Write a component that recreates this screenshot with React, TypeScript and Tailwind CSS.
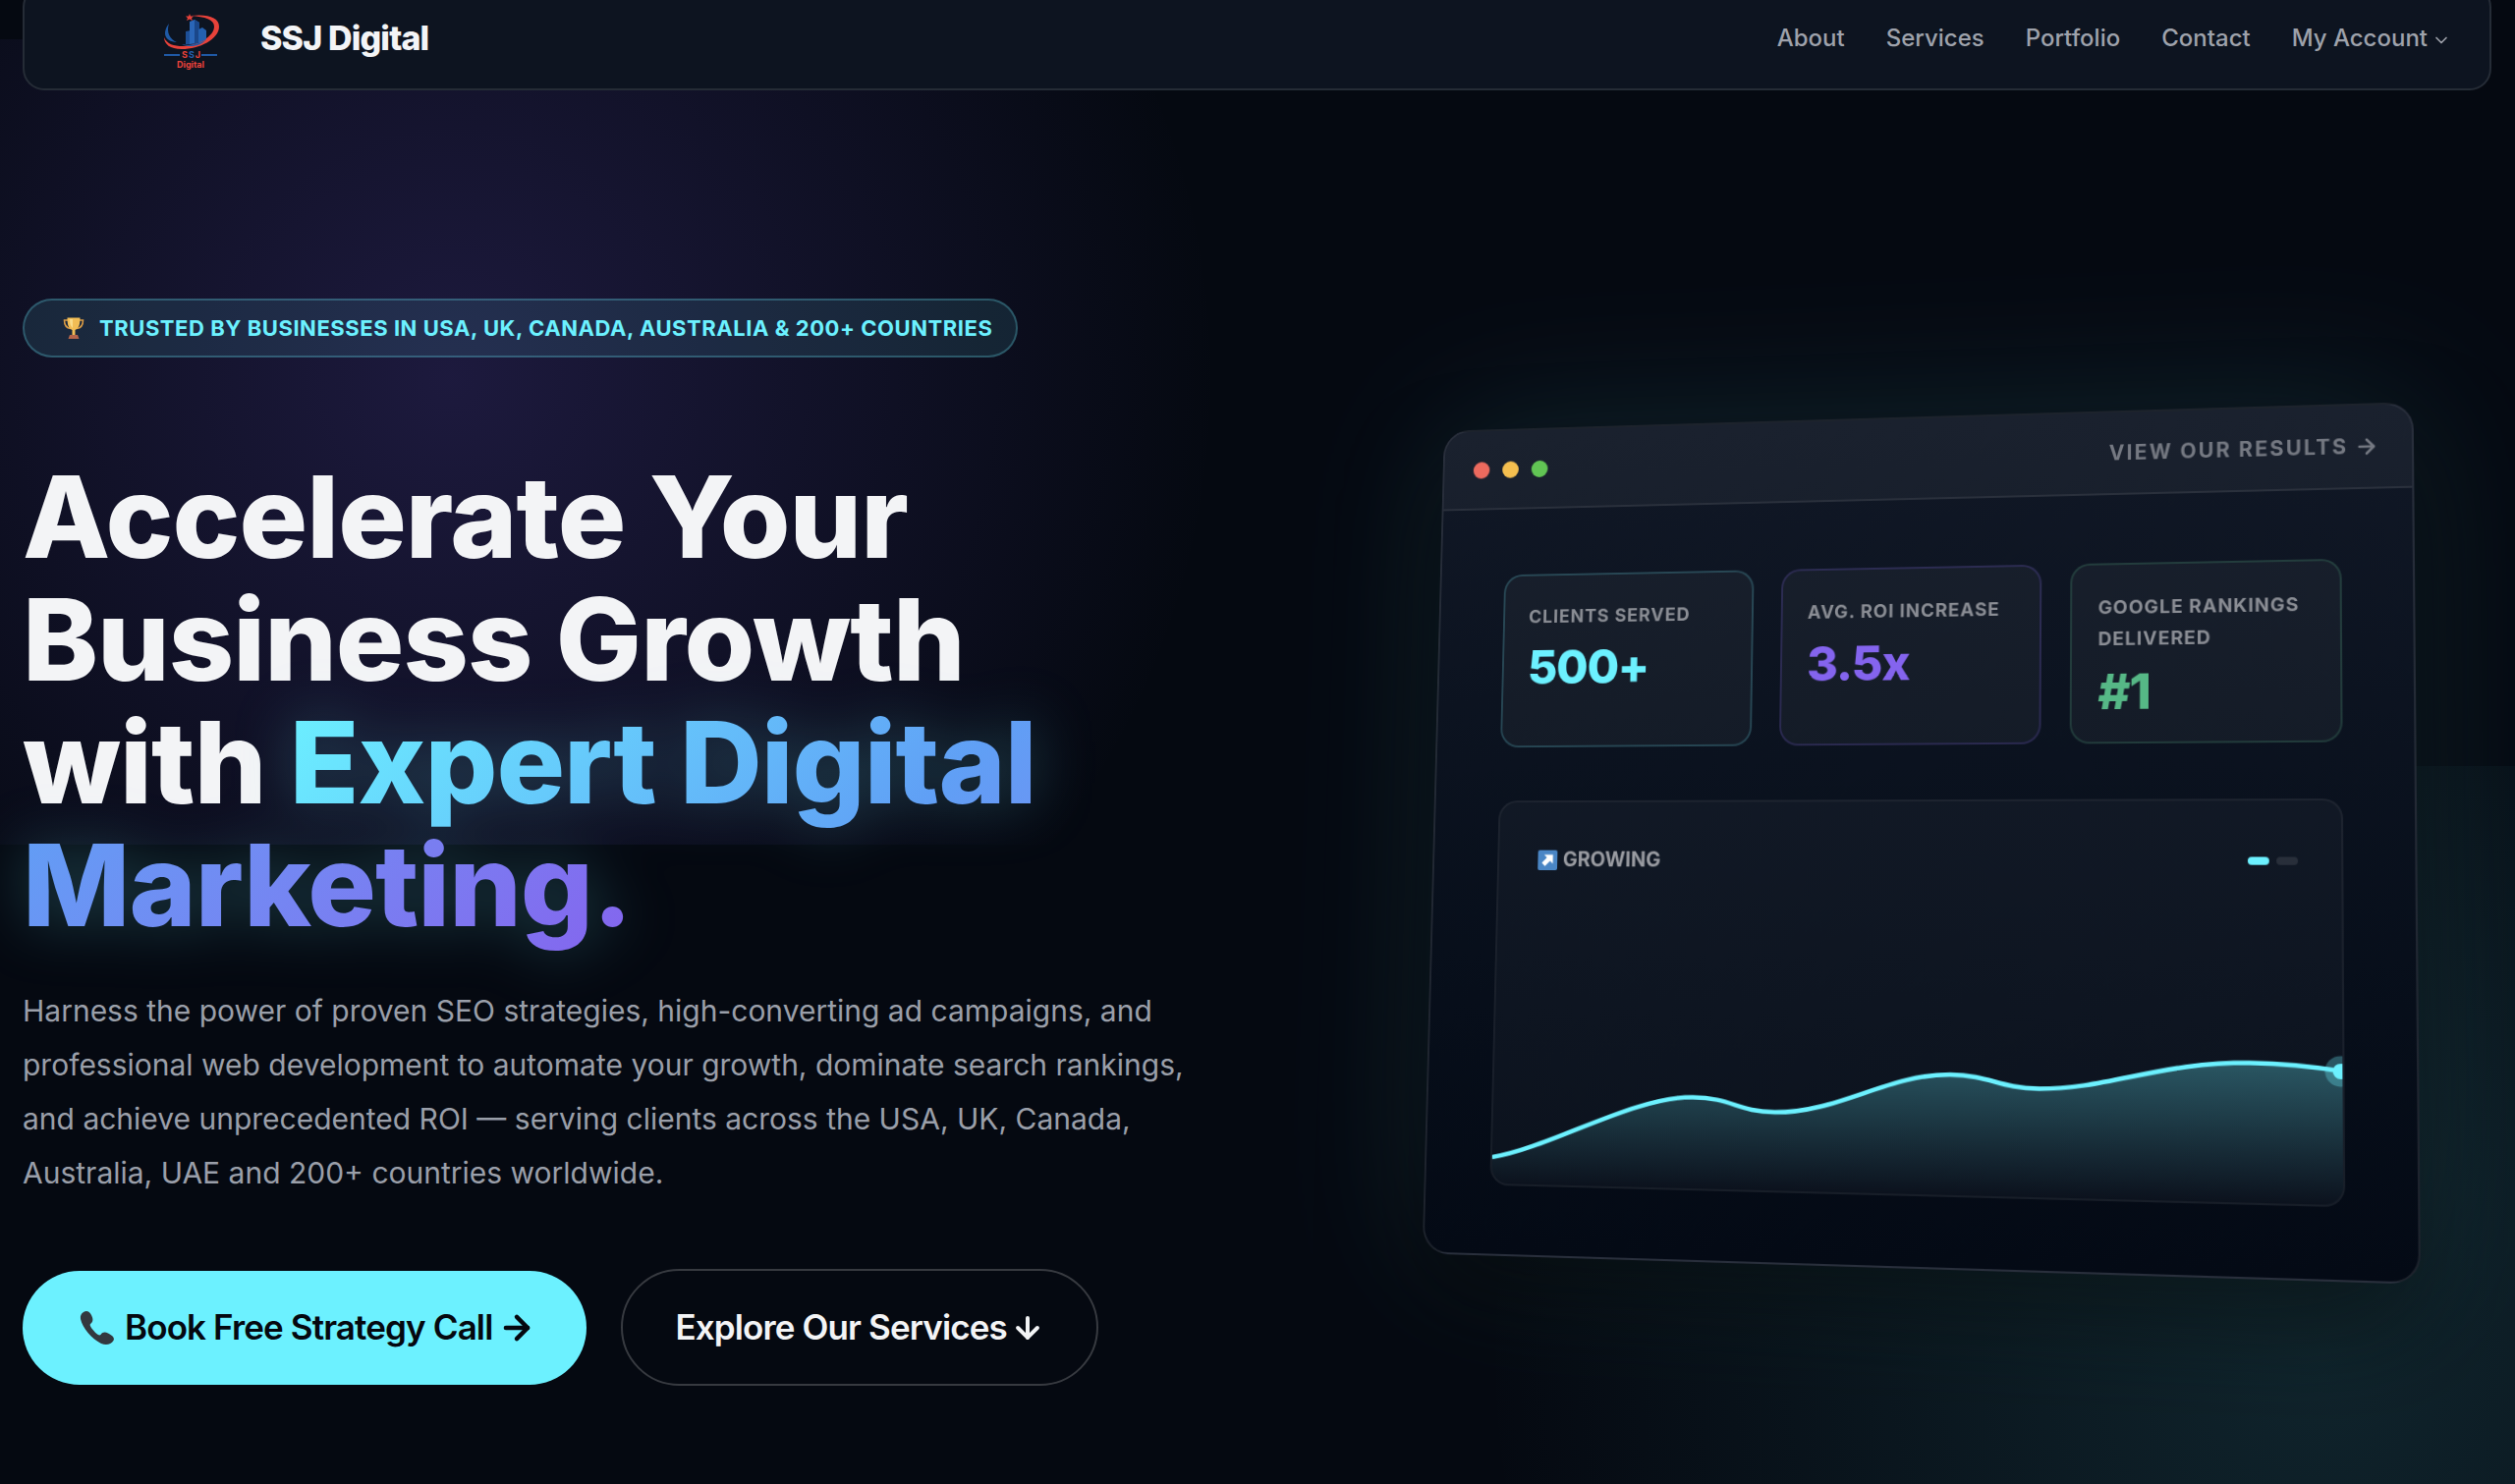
import { ArrowDown, ArrowRight, ChevronDown } from 'lucide-react'

interface Stat {
  label: string
  value: string
  border: string
  color: string
}

const navLinks = ['About', 'Services', 'Portfolio', 'Contact']

const stats: Stat[] = [
  { label: 'Clients Served', value: '500+', border: 'border-[#6cf1ff]/20', color: 'text-[#6cf1ff]' },
  { label: 'Avg. ROI Increase', value: '3.5x', border: 'border-[#8464ee]/20', color: 'text-[#8464ee]' },
  { label: 'Google Rankings Delivered', value: '#1', border: 'border-[#56b886]/20', color: 'text-[#56b886]' },
]

function Logo() {
  return (
    <svg viewBox="0 0 58 58" className="mt-2 h-[58px] w-[58px]" aria-hidden="true">
      <path d="M7 10C0 19 2 28 15 29C8 26 4 19 7 10Z" fill="#1f5aa6" />
      <path d="M29 2C47 0 58 4 58 13C58 26 38 36 20 36C8 36 2 31 2 24C5 31 12 33 21 33C37 32 53 23 53 13C53 6 44 3 29 2Z" fill="#e8423a" />
      <path d="M28 0L29 2.500L32 2.500L30 4.500L31 7L28 5.500L25 7L26 4.500L24 2.500L27 2.500Z" fill="#e8423a" />
      <path d="M24 18L29 17V31H24Z" fill="#1d4f96" />
      <path d="M28 8L33 6L38 9V30L28 31Z" fill="#2a66b8" />
      <path d="M33 6L38 9V30L33 30.500Z" fill="#1a478a" />
      <path d="M37 16L41 14L45 17V26L37 30Z" fill="#2461b0" />
      <path d="M20 31C30 33 40 30 45 26C40 33 28 35 20 31Z" fill="#1f5aa6" />
      <rect x="2" y="41" width="16" height="2" fill="#1f5aa6" />
      <rect x="40" y="41" width="16" height="2" fill="#1f5aa6" />
      <text x="20" y="45" fontFamily="Inter, sans-serif" fontSize="9" fontWeight="700" letterSpacing="1">
        <tspan fill="#e8423a">S</tspan>
        <tspan fill="#2461b0">S</tspan>
        <tspan fill="#e8423a">J</tspan>
      </text>
      <text x="29" y="55" textAnchor="middle" fontFamily="Inter, sans-serif" fontSize="9" fontWeight="700" fill="#e8423a">
        Digital
      </text>
    </svg>
  )
}

function TrophyIcon() {
  return (
    <svg viewBox="0 0 24 24" className="h-6 w-6 shrink-0" aria-hidden="true">
      <path d="M6 4H2.500C2.500 9 4.500 12 9 12.500" fill="none" stroke="#d99a45" strokeWidth="1.600" />
      <path d="M18 4H21.500C21.500 9 19.500 12 15 12.500" fill="none" stroke="#d99a45" strokeWidth="1.600" />
      <path d="M5.500 1.500H18.500C18.500 8 17.500 12.500 13.500 14V19H10.500V14C6.500 12.500 5.500 8 5.500 1.500Z" fill="#f2bd55" />
      <path d="M8 3H11V12C8.500 10 8 7 8 3Z" fill="#fbdc8a" />
      <path d="M8 19H16L17.500 23H6.500Z" fill="#b5654a" />
    </svg>
  )
}

function PhoneIcon() {
  return (
    <svg viewBox="0 0 36 36" className="h-9 w-9 shrink-0" aria-hidden="true">
      <path
        d="M4 2C7 0 10 1 12 5C14 9 14 12 11 14C10 15 11 17 14 20.500C17 24 19.500 26.500 21.500 25C23.500 22 26 22 29 23.500C34 26 36 28.500 34.500 31C32 35 27 36 22 34C12 29 3 18 1 9C0.500 6 1.500 3.500 4 2Z"
        fill="#33383f"
      />
    </svg>
  )
}

function GrowIcon() {
  return (
    <svg viewBox="0 0 22 22" className="h-[21px] w-[21px]" aria-hidden="true">
      <rect width="22" height="22" rx="2" fill="#4a86c5" />
      <path d="M7 5H17V15L13.800 11.800L8 17.500L4.500 14L10.200 8.200Z" fill="#fff" />
    </svg>
  )
}

function GrowthChart() {
  const line =
    'M0 173C62 162 150 107.500 212 107.500C254 107.500 258 121 298 121C362 121 415 80 477 80C519 80 525 92.400 567 92.400C632 92.400 690 63.400 774 63.400C806 63.400 836 66 864 70.400'
  return (
    <svg viewBox="0 0 864 200" preserveAspectRatio="none" className="block h-[200px] w-full" aria-hidden="true">
      <defs>
        <linearGradient id="area" x1="0" y1="0" x2="0" y2="1">
          <stop offset="0" stopColor="#6cf1ff" stopOpacity="0.3" />
          <stop offset="1" stopColor="#6cf1ff" stopOpacity="0" />
        </linearGradient>
      </defs>
      <path d={`${line}V200H0Z`} fill="url(#area)" />
      <path d={line} fill="none" stroke="#6cf1ff" strokeWidth="4.500" />
      <circle cx="862" cy="70.400" r="15" fill="#6cf1ff" fillOpacity="0.3" />
      <circle cx="862" cy="70.400" r="7.500" fill="#6cf1ff" />
    </svg>
  )
}

function Header() {
  return (
    <header className="relative -mt-[15px] flex h-[107px] items-center justify-between rounded-[22px] border-2 border-white/10 bg-[#0d1420] pr-[39px] pl-[140px]">
      <a href="#home" className="flex items-center gap-[42px]">
        <Logo />
        <span className="text-[34px] font-extrabold tracking-tight text-[#f3f4f6]">SSJ Digital</span>
      </a>
      <nav className="flex items-center gap-[42px] text-2xl font-medium text-[#9ea2ab]">
        {navLinks.map(link => (
          <a key={link} href={`#${link.toLowerCase()}`}>
            {link}
          </a>
        ))}
        <button type="button" className="flex items-center gap-1">
          My Account
          <ChevronDown size={20} strokeWidth={2} className="mt-1" />
        </button>
      </nav>
    </header>
  )
}

function Dashboard() {
  return (
    <div className="w-[85%] overflow-hidden rounded-[28px] border-2 border-white/10 bg-linear-to-b from-[#111826] to-[#040a15] shadow-[0_50px_100px_rgba(0,0,0,0.5),0_0_160px_rgba(108,241,255,0.13)] [transform:perspective(2000px)_rotateY(-8deg)_rotateX(4deg)]">
      <div className="flex h-[85px] items-center justify-between border-b-2 border-white/8 bg-white/4 px-8">
        <div className="flex gap-3.5">
          <span className="h-[18px] w-[18px] rounded-full bg-[#ec6a5e]" />
          <span className="h-[18px] w-[18px] rounded-full bg-[#f5bf4f]" />
          <span className="h-[18px] w-[18px] rounded-full bg-[#61c554]" />
        </div>
        <a href="#results" className="flex items-center gap-1.5 text-[21px] font-bold tracking-widest text-[#757982]">
          VIEW OUR RESULTS
          <ArrowRight size={24} strokeWidth={2.5} />
        </a>
      </div>
      <div className="flex flex-col gap-14 px-[69px] py-[70px]">
        <div className="grid grid-cols-3 gap-[29px]">
          {stats.map(stat => (
            <div key={stat.label} className={`rounded-[20px] border-2 bg-white/4 px-[26px] pt-7 pb-[26px] ${stat.border}`}>
              <div className="text-[19px] leading-8 font-bold tracking-wider text-[#8b8e95] uppercase">{stat.label}</div>
              <div className={`mt-3 text-[50px] leading-[50px] font-extrabold tracking-tight ${stat.color}`}>{stat.value}</div>
            </div>
          ))}
        </div>
        <div className="flex h-[400px] flex-col justify-between overflow-hidden rounded-[20px] border-2 border-white/5 bg-white/3">
          <div className="flex items-center justify-between px-[42px] pt-11">
            <div className="flex items-center gap-1.5 text-[21px] leading-8 font-bold text-[#9a9ca2]">
              <GrowIcon />
              GROWING
            </div>
            <div className="flex gap-[7px]">
              <span className="h-2 w-[21px] rounded-full bg-[#6cf1ff]" />
              <span className="h-2 w-[21px] rounded-full bg-white/10" />
            </div>
          </div>
          <GrowthChart />
        </div>
      </div>
    </div>
  )
}

export default function App() {
  return (
    <div className="relative min-h-screen overflow-hidden bg-[#050911] pr-6 pl-[23px] font-['Inter',sans-serif]">
      <div className="absolute top-10 -left-[400px] h-[820px] w-[1720px] bg-[radial-gradient(circle_780px_at_50%_42%,rgba(124,92,240,0.20),transparent)]" />
      <div className="absolute top-[780px] -right-[400px] h-[1200px] w-[1600px] bg-[radial-gradient(circle_850px_at_1000px_600px,rgba(80,200,210,0.14),transparent)]" />
      <Header />
      <main className="relative grid grid-cols-2 items-center gap-[136px] pt-[212px] pb-[100px]">
        <section className="flex flex-col items-start">
          <div className="flex h-[60px] items-center gap-3.5 rounded-full border-2 border-[#6cf1ff]/25 bg-[#6cf1ff]/10 pr-6 pl-[38px] text-[22px] font-bold tracking-wide whitespace-nowrap text-[#6cf1ff]">
            <TrophyIcon />
            TRUSTED BY BUSINESSES IN USA, UK, CANADA, AUSTRALIA &amp; 200+ COUNTRIES
          </div>
          <h1 className="mt-[100px] text-[116px] leading-[125px] font-extrabold tracking-[-1px] text-[#f3f4f6]">
            Accelerate Your
            <br />
            Business Growth
            <br />
            with{' '}
            <span className="bg-linear-135 from-[#6cf1ff] via-[#609ff5] to-[#8464ee] bg-clip-text text-transparent drop-shadow-[0_0_30px_rgba(108,241,255,0.25)]">
              Expert Digital
              <br />
              Marketing.
            </span>
          </h1>
          <p className="mt-[38px] text-[30px] leading-[55px] text-[#9a9fa9]">
            Harness the power of proven SEO strategies, high-converting ad campaigns, and professional web development to
            automate your growth, dominate search rankings, and achieve unprecedented ROI — serving clients across the USA,
            UK, Canada, Australia, UAE and 200+ countries worldwide.
          </p>
          <div className="mt-[70px] flex items-center gap-[35px] text-[35px] font-semibold tracking-tight whitespace-nowrap">
            <a href="#call" className="flex h-[116px] items-center gap-2.5 rounded-full bg-[#6cf1ff] pr-[52px] pl-[58px] text-[#05080f]">
              <PhoneIcon />
              Book Free Strategy Call
              <ArrowRight size={38} strokeWidth={2.8} className="-ml-1" />
            </a>
            <a href="#services" className="flex h-[119px] items-center gap-1 rounded-full border-2 border-white/20 px-[53px] text-[#f3f4f6]">
              Explore Our Services
              <ArrowDown size={34} strokeWidth={2.8} />
            </a>
          </div>
        </section>
        <section className="flex justify-center pb-3">
          <Dashboard />
        </section>
      </main>
    </div>
  )
}
